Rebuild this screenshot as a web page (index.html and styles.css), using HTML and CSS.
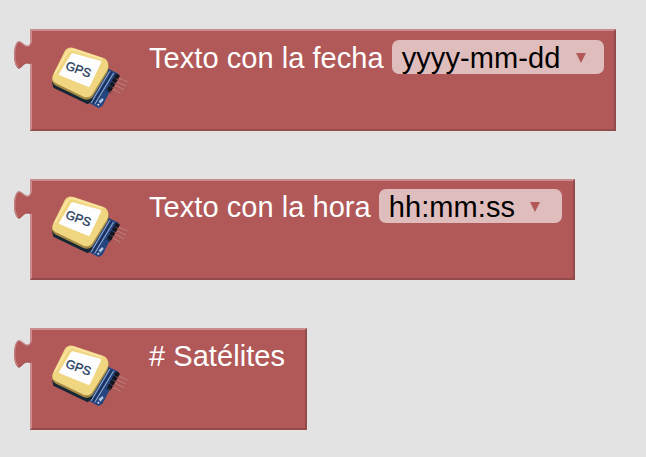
FILE: index.html
```html
<!DOCTYPE html>
<html lang="es">
<head>
  <meta charset="UTF-8">
  <meta name="viewport" content="width=device-width, initial-scale=1.0">
  <title>Bloques GPS</title>
  <link rel="stylesheet" href="styles.css">
</head>
<body>
  <svg class="defs" width="0" height="0">
    <symbol id="tab" viewBox="0 0 20 34">
      <path d="M20 4 L17 4 C16 8 12 8 9 5 C7 3 5 2 4 3 C1 5 0 11 0 17 C0 23 2 29 5 29.500 C8 29 10 24 14 24 L20 25 Z" fill="#b15959"/>
      <path d="M16.500 5 C15 8 12 8 9 5 C7 3 5 2 4 3 C1.500 5 .7 11 .7 17 C.7 22 2 26 4 28.500" fill="none" stroke="#c58484" stroke-width="1.300"/>
      <path d="M4 29 C7 30 9 24 13 24 L17 24.500" fill="none" stroke="#a05252" stroke-width="1"/>
    </symbol>
    <symbol id="gps" viewBox="0 0 270 216" overflow="visible">
      <!-- pins -->
      <path d="M216 106 L248 120 M210 117 L243 132 M205 127 L237 143 M199 138 L226 154" stroke="#c19494" stroke-width="2"/>
      <!-- board -->
      <path d="M22 126 L142 188 L160 198 L172 192 L222 96 L190 80 Z" fill="#24457f"/>
      <path d="M21 119 L25 137 L128 187 L147 172 Z" fill="#172634"/>
      <path d="M138 183 L194 88 M149 187 L206 93" stroke="#bccbe0" stroke-width="2.500"/>
      <path d="M144 185 L200 91" stroke="#12264f" stroke-width="3"/>
      <path d="M219 98 L190 149" stroke="#15161c" stroke-width="14" stroke-dasharray="12 2"/>
      <path d="M161 178 l11 -10 l4 5 l-10 12 Z" fill="#b5c8e2"/>
      <circle cx="160" cy="188" r="3" fill="#d3dff0"/>
      <!-- antenna -->
      <path d="M22 104 Q17 122 33 131 L115 171 Q134 178 145 161 L187 92 Q193 79 190 62 Z" fill="#a58b45"/>
      <path d="M59 28 Q68 13 86 18 L174 47 Q191 53 190 73 Q189 81 185 87 L145 152 Q135 170 116 164 L33 124 Q16 115 25 97 Z" fill="#f1d682"/>
      <path d="M30 94 L65 33 Q73 20 86 23 L172 51" fill="none" stroke="#fae5a3" stroke-width="5"/>
      <path d="M84 34 L166 56 Q170 58 168 62 L135 132 Q133 136 129 134 L44 100 Q40 98 43 94 L78 37 Q80 34 84 34 Z" fill="#fdfdfd"/>
      <text class="gps-label" transform="translate(59 81) rotate(20)">GPS</text>
    </symbol>
  </svg>

  <main class="workspace">
    <div class="block block-date">
      <svg class="tab"><use href="#tab"/></svg>
      <svg class="icon"><use href="#gps"/></svg>
      <span class="label">Texto con la fecha</span>
      <div class="dropdown">
        <span>yyyy-mm-dd</span>
        <span class="arrow"></span>
      </div>
    </div>

    <div class="block block-time">
      <svg class="tab"><use href="#tab"/></svg>
      <svg class="icon"><use href="#gps"/></svg>
      <span class="label">Texto con la hora</span>
      <div class="dropdown">
        <span>hh:mm:ss</span>
        <span class="arrow"></span>
      </div>
    </div>

    <div class="block block-sat">
      <svg class="tab"><use href="#tab"/></svg>
      <svg class="icon"><use href="#gps"/></svg>
      <span class="label"># Satélites</span>
    </div>
  </main>
</body>
</html>
```
FILE: styles.css
```css
body {
  margin: 0;
  background: #e3e3e3;
  font-family: Arial, "Liberation Sans", sans-serif;
  font-size: 29px;
}
.defs {
  position: absolute;
}
.workspace {
  display: flex;
  flex-direction: column;
  align-items: flex-start;
  gap: 48px;
  padding: 29px 0 0 30px;
}
.block {
  position: relative;
  display: flex;
  align-items: flex-start;
  box-sizing: border-box;
  height: 102px;
  padding: 9px 0 0 13px;
  background: #b15959;
  border: 2px solid;
  border-color: #c98b8b #944b4b #944b4b #c98b8b;
}
.block-date {
  width: 586px;
}
.block-time {
  width: 545px;
  height: 101px;
}
.block-sat {
  width: 277px;
}
.block-time,
.block-sat {
  padding-top: 8px;
}
.tab {
  position: absolute;
  left: -18px;
  top: 8px;
  width: 20px;
  height: 34px;
}
.icon {
  width: 90px;
  height: 72px;
  margin: 2px 14px 0 0;
  overflow: visible;
}
.label {
  color: #fff;
  line-height: 34px;
  padding-top: 1px;
  white-space: nowrap;
  letter-spacing: 0.05px;
}
.dropdown {
  display: flex;
  align-items: flex-start;
  box-sizing: border-box;
  height: 34px;
  margin-left: 8px;
  padding: 1px 17px 0 10px;
  border-radius: 7px;
  background: #e0bdbd;
  color: #000;
  line-height: 34px;
  letter-spacing: 0.1px;
}
.block-date .dropdown {
  padding-right: 18px;
}
.block-time .dropdown {
  padding-right: 22px;
}
.arrow {
  margin: 12px 0 0 15px;
  border: 5.5px solid transparent;
  border-top: 10px solid #b15959;
  border-bottom: 0;
}
.gps-label {
  font-size: 37px;
  fill: #263c5c;
  stroke: #263c5c;
  stroke-width: 1;
}
```
